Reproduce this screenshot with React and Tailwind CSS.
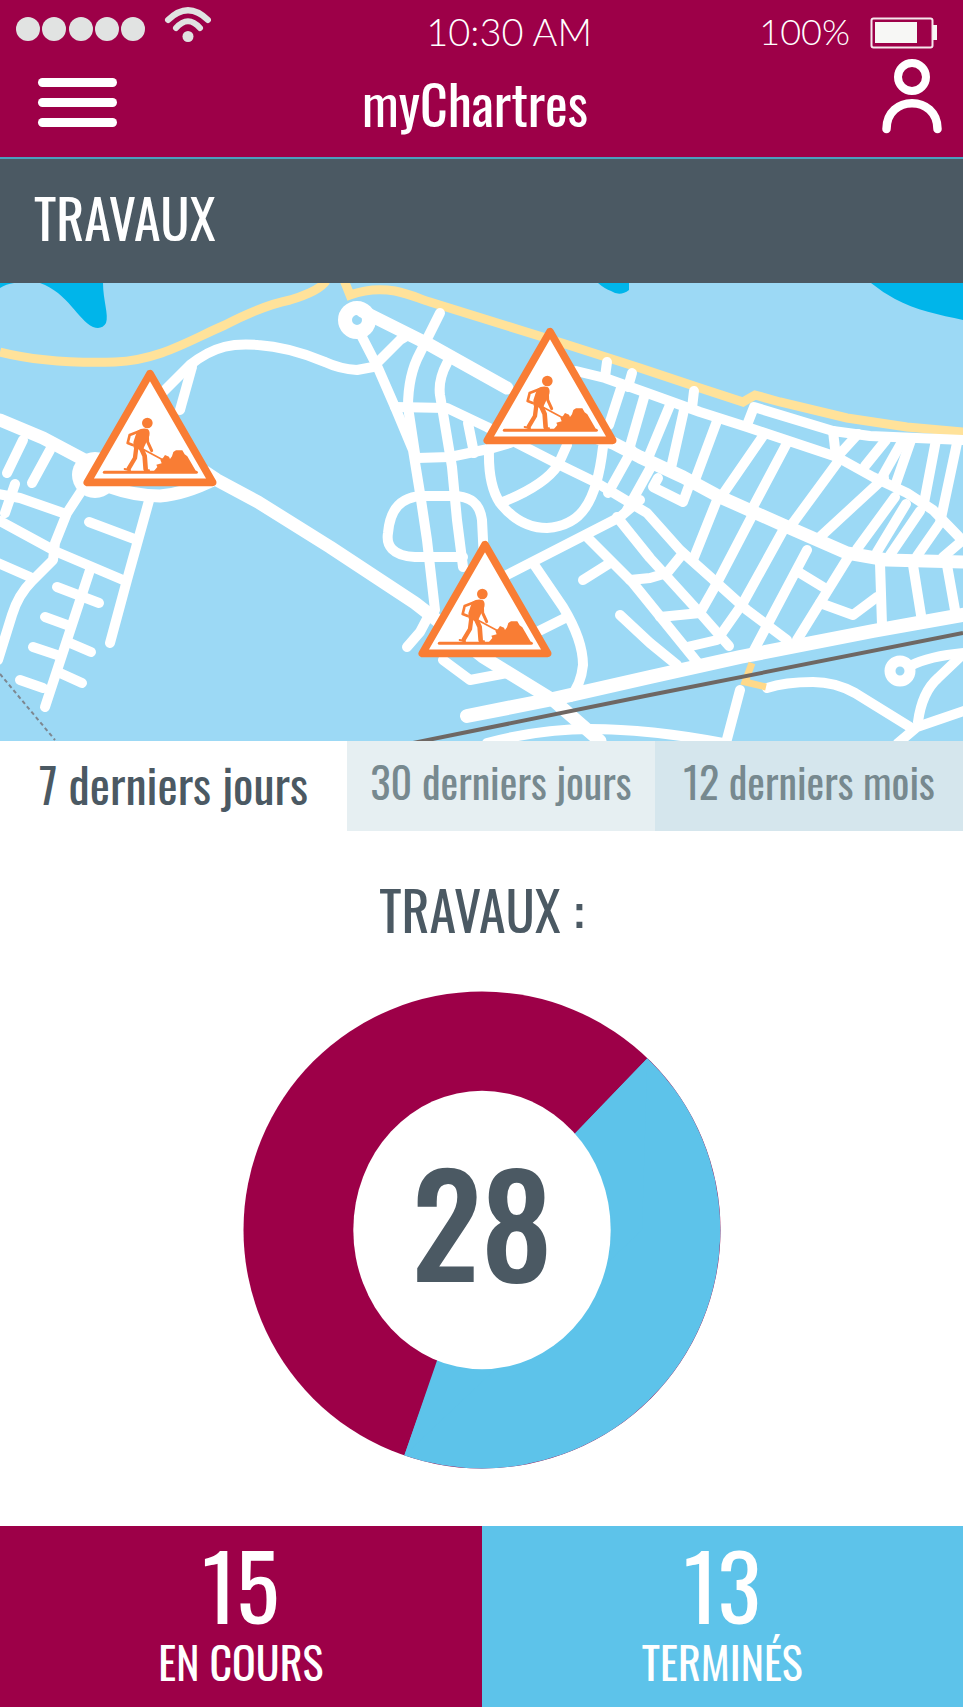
import { useState } from "react";

const YELLOW_ROADS = [
  "M0 352C40 362 80 363 115 362C160 360 190 340 225 325C250 312 275 303 290 300C310 294 322 287 326 281",
  "M344 280L350 295Q372 287 395 291C410 294 420 299 430 302L520 330L562 343L640 368L700 388L743 402L755 395L780 402L847 418L907 427L964 432",
];

const WIDE_ROADS = [
  "M362 311L430 345L507 388",
  "M560 425L613 443L640 457L683 477L720 497L783 525L847 553L887 560L963 562",
  "M205 472L217 480L258 502L330 547L415 603L433 617L483 657L553 700L600 741",
  "M0 420L43 438L92 464",
  "M110 487Q135 496 160 496Q185 494 215 479",
];

const ROADS = [
  "M160 395L190 365C215 345 235 343 258 345C290 347 315 358 325 362Q340 369 357 370L373 367L400 340L410 334",
  "M192 367L180 410",
  "M361 335L378 368L395 407L413 450L420 493L427 540L435 610",
  "M440 313L420 353Q408 375 408 407L416 460",
  "M447 363Q438 380 440 395L452 467L457 520L463 567",
  "M395 407L447 408L487 427L517 443L560 465L597 483L647 513L680 550L717 583L747 610L787 640",
  "M468 423L474 453",
  "M417 458L450 457L493 448L510 443",
  "M489 450Q488 485 500 503Q520 528 547 528Q573 526 585 508Q598 490 603 447",
  "M503 502Q545 485 558 465L567 445",
  "M463 557H415C392 556 386 545 388 533C390 510 400 497 422 496H450C472 495 480 505 482 520L484 560",
  "M430 613L420 632L407 647",
  "M443 660L470 680L507 673",
  "M505 576L620 517L640 500",
  "M533 563L563 607Q583 640 583 665Q581 685 570 697",
  "M567 617L535 633",
  "M587 537L633 583L697 662",
  "M583 580L610 563",
  "M617 517L650 558L700 613L729 646",
  "M630 580L650 578L667 573L680 557",
  "M620 615L650 643L677 665",
  "M660 617L700 613L717 583L752 516",
  "M687 647L717 640L743 603L785 527",
  "M693 560L717 500",
  "M753 652L807 550",
  "M797 640L849 556",
  "M800 573L823 587",
  "M820 603L853 615L877 597",
  "M880 563L882 625",
  "M913 565L921 615",
  "M947 565L955 610",
  "M576 371L605 378L650 394L700 412L747 427L837 457L873 477L907 493L933 510L963 541",
  "M790 527L837 463",
  "M820 537L884 478",
  "M857 549L895 497",
  "M877 552L906 504",
  "M890 555L920 511",
  "M917 556L940 523",
  "M943 557L963 540",
  "M940 523L957 443",
  "M924 503L936 440",
  "M895 486L911 440",
  "M881 479L903 440",
  "M865 466L886 440",
  "M837 457L858 434",
  "M833 431L836 457",
  "M747 425L754 407L833 431L870 436L963 440",
  "M723 494L763 436",
  "M753 507L787 443",
  "M695 480L717 421",
  "M671 468L684 410",
  "M648 458L670 405",
  "M692 408L694 391",
  "M609 425L622 385",
  "M628 453L645 394",
  "M605 377L607 362",
  "M628 387L632 373",
  "M608 493L632 450",
  "M627 510L652 465",
  "M658 478L653 487L683 502L690 483",
  "M487 743Q540 729 590 729Q650 729 723 743",
  "M767 688Q785 682 813 682Q835 682 855 693L910 727",
  "M898 743L917 727L964 711",
  "M918 722Q922 692 938 678L962 655",
  "M910 666Q930 656 964 653",
  "M740 690L726 743",
  "M150 497L127 580L110 643",
  "M23 440L7 473",
  "M50 450L32 483",
  "M82 490L67 513L55 543L53 560L32 581Q18 595 12 615L-2 660",
  "M-2 494L20 498L63 513",
  "M15 484L5 513",
  "M-2 520L57 552L123 580",
  "M-2 563L30 577",
  "M89 522L137 540",
  "M90 570L45 707",
  "M57 587L99 603",
  "M45 617L67 625",
  "M70 643L91 652",
  "M33 647L57 655",
  "M60 673L82 683",
  "M20 680L43 688",
];

const MARKERS = [
  { x: 70, y: 362 },
  { x: 470, y: 320 },
  { x: 405, y: 533 },
];

function RoadworkMarker({ x, y }) {
  return (
    <g transform={`translate(${x} ${y}) scale(0.3333)`} strokeLinecap="round" strokeLinejoin="round">
      <path d="M240 35L52 361H428Z" fill="#fff" stroke="#f97d34" strokeWidth="23" />
      <g fill="none" stroke="#f97d34">
        <path d="M103 331H379" strokeWidth="9" />
        <path d="M210 207L179 219L173 243L188 249" strokeWidth="8" />
        <path d="M232 212L233 240L245 266" strokeWidth="9" />
        <path d="M222 263L285 297" strokeWidth="5" />
        <path d="M199 256L195 288L176 320" strokeWidth="13" />
        <path d="M164 321L180 325" strokeWidth="6" />
        <path d="M212 256L224 282L227 322" strokeWidth="14" />
        <path d="M226 325H237" strokeWidth="6" />
      </g>
      <g fill="#f97d34">
        <circle cx="232" cy="183" r="16" />
        <path d="M202 207Q218 196 234 202Q241 208 238 222L221 258L210 264L190 256Q188 240 196 222Z" />
        <path d="M250 329L262 315L259 308L275 304L271 293L279 288L285 279L297 284L300 291L306 283L310 270L318 265H337L344 277L352 283L379 329Z" />
      </g>
    </g>
  );
}

function CityMap() {
  return (
    <svg viewBox="0 283 963 458" className="block h-auto w-full bg-[#9cd9f5]" role="img" aria-label="Carte des travaux">
      <g fill="#00b5ea">
        <path d="M0 283H14Q6 284 0 288Z" />
        <path d="M40 283H103C103 300 109 315 106 323Q102 330 93 327C78 320 68 293 40 283Z" />
        <path d="M598 283H629V290Q620 297 611 291Q605 289 598 283Z" />
        <path d="M871 283H963V320C940 315 915 310 895 299Q882 292 871 283Z" />
      </g>
      <g fill="none" stroke="#ffe29a" strokeWidth="9">
        {YELLOW_ROADS.map((d) => <path key={d} d={d} />)}
      </g>
      <g fill="none" stroke="#fff" strokeLinecap="round" strokeLinejoin="round">
        <g strokeWidth="10">
          {ROADS.map((d) => <path key={d} d={d} />)}
        </g>
        <g strokeWidth="13">
          {WIDE_ROADS.map((d) => <path key={d} d={d} />)}
        </g>
        <path d="M467 716L553 699L650 677L740 657L873 631L968 614" strokeWidth="14" />
        <circle cx="357" cy="320" r="12" strokeWidth="14" />
        <circle cx="900" cy="671" r="10" strokeWidth="11" />
      </g>
      <circle cx="95" cy="475" r="23" fill="#fff" />
      <path d="M752 663L745 682L766 687" fill="none" stroke="#ffd98a" strokeWidth="7" />
      <path d="M413 743L650 695L963 633" fill="none" stroke="#6e6763" strokeWidth="4" />
      <path d="M0 674L55 740" fill="none" stroke="#7d8790" strokeWidth="2" strokeDasharray="4 3" />
      {MARKERS.map((m) => <RoadworkMarker key={m.x} x={m.x} y={m.y} />)}
    </svg>
  );
}

function StatusBar() {
  return (
    <div className="flex h-[54px] items-center pr-[26px] pl-4 font-['Lato',sans-serif] font-light text-white">
      <svg className="mb-0.5" width="195" height="44" viewBox="16 4 195 44" aria-hidden="true">
        <g fill="#e1e3e2">
          <circle cx="28" cy="29" r="12" />
          <circle cx="54" cy="29" r="12" />
          <circle cx="81" cy="29" r="12" />
          <circle cx="107" cy="29" r="12" />
          <circle cx="133" cy="29" r="12" />
          <circle cx="188" cy="36.500" r="5.500" />
        </g>
        <g fill="none" stroke="#e1e3e2" strokeWidth="6" strokeLinecap="round">
          <path d="M168 20Q188 0.500 208 20" />
          <path d="M176 28Q188 14.500 200 28" />
        </g>
      </svg>
      <time className="flex-1 pt-2 pl-12 text-center text-[38px] leading-[46px]">10:30 AM</time>
      <span className="mr-5 pt-2 text-4xl leading-[46px]">100%</span>
      <svg className="mt-3" width="67" height="32" viewBox="870 18 67 32" aria-hidden="true">
        <rect x="871.500" y="19.500" width="61" height="29" rx="2" fill="none" stroke="#f6e6ec" strokeWidth="2" />
        <rect x="875" y="23" width="42" height="21" fill="#f7f7f5" />
        <rect x="933" y="26" width="4" height="15" fill="#f7f7f5" />
      </svg>
    </div>
  );
}

function Header() {
  return (
    <header className="border-b-2 border-[#4a9fbe] bg-[#9d0048] text-white">
      <StatusBar />
      <div className="flex h-[103px] items-center pr-5 pl-[38px]">
        <button type="button" aria-label="Menu" className="flex w-[79px] flex-col gap-[11px] pb-1.5">
          <span className="h-[9px] rounded-full bg-white" />
          <span className="h-[9px] rounded-full bg-white" />
          <span className="h-[9px] rounded-full bg-white" />
        </button>
        <h1 className="flex-1 pr-12 pb-1.5 text-center text-[54px] leading-[64px]">myChartres</h1>
        <button type="button" aria-label="Mon compte" className="self-start pt-1">
          <svg width="62" height="76" viewBox="881 58 62 76" fill="none" stroke="#fff" strokeLinecap="round">
            <circle cx="912" cy="77" r="14" strokeWidth="8" />
            <path d="M886.500 129C886.500 94.500 937.500 94.500 937.500 129" strokeWidth="8.500" />
          </svg>
        </button>
      </div>
    </header>
  );
}

const PERIODS = [
  { label: "7 derniers jours", idle: "bg-[#f2f6f8]" },
  { label: "30 derniers jours", idle: "bg-[#e6eff2]" },
  { label: "12 derniers mois", idle: "bg-[#d5e6ed]" },
];

function PeriodTabs() {
  const [active, setActive] = useState(0);
  return (
    <div role="tablist" className="grid h-[90px] grid-cols-[347fr_308fr_308fr]">
      {PERIODS.map((p, i) => (
        <button
          key={p.label}
          type="button"
          role="tab"
          aria-selected={i === active}
          onClick={() => setActive(i)}
          className={
            i === active
              ? "bg-white pb-1 text-[48px] leading-[56px] whitespace-nowrap text-[#4b5963]"
              : `pb-2.5 text-[42px] leading-[56px] whitespace-nowrap text-[#77898f] ${p.idle}`
          }
        >
          {p.label}
        </button>
      ))}
    </div>
  );
}

function Donut() {
  return (
    <svg viewBox="-239 -239 478 478" className="h-auto w-[478px] max-w-full" role="img" aria-label="28 travaux">
      <circle r="238.500" fill="#9d0048" />
      <path d="M165.400 -171.700A238.500 238.500 0 0 1 -77.700 225.500L0 0Z" fill="#5dc3ea" />
      <path d="M93.300 -96.700L165.400 -171.700L160 0L-77.700 225.500L-44.300 131.300Z" fill="#5dc3ea" />
      <ellipse rx="128.700" ry="139.300" fill="#fff" />
      <text y="52" textAnchor="middle" fontSize="140" fontWeight="500" fill="#4b5963">28</text>
    </svg>
  );
}

function Stat({ value, label, tone }) {
  return (
    <div className={`flex flex-col items-center gap-3 pt-4 pb-[21px] text-white ${tone}`}>
      <strong className="text-[90px] leading-[84px] font-normal">{value}</strong>
      <span className="text-[44px] leading-[48px]">{label}</span>
    </div>
  );
}

export default function App() {
  return (
    <main className="min-h-screen bg-white font-['Oswald','Roboto_Condensed','Liberation_Sans',sans-serif]">
      <Header />
      <h2 className="bg-[#4b5963] px-[34px] pt-[26px] pb-[34px] text-[54px] leading-[64px] text-white">TRAVAUX</h2>
      <CityMap />
      <PeriodTabs />
      <section className="flex flex-col items-center gap-[54px] pt-[50px] pb-[57px]">
        <h3 className="text-[54px] leading-[56px] text-[#4b5963]">TRAVAUX :</h3>
        <Donut />
      </section>
      <footer className="grid grid-cols-2">
        <Stat value="15" label="EN COURS" tone="bg-[#9d0048]" />
        <Stat value="13" label="TERMINÉS" tone="bg-[#5dc3ea]" />
      </footer>
    </main>
  );
}
